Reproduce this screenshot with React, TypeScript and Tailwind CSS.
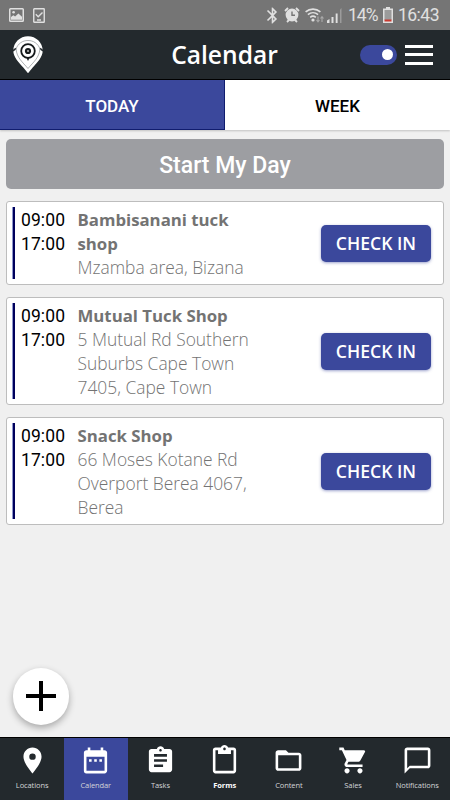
import { useState } from "react";
import clsx from "clsx";
import type { IconType } from "react-icons";
import {
  MdAssignment,
  MdBluetooth,
  MdChatBubbleOutline,
  MdContentPaste,
  MdDateRange,
  MdFolderOpen,
  MdLocationOn,
  MdShoppingCart,
} from "react-icons/md";

type Visit = {
  start: string;
  end: string;
  name: string;
  address: string;
};

const VISITS: Visit[] = [
  { start: "09:00", end: "17:00", name: "Bambisanani tuck shop", address: "Mzamba area, Bizana" },
  {
    start: "09:00",
    end: "17:00",
    name: "Mutual Tuck Shop",
    address: "5 Mutual Rd Southern Suburbs Cape Town 7405, Cape Town",
  },
  {
    start: "09:00",
    end: "17:00",
    name: "Snack Shop",
    address: "66 Moses Kotane Rd Overport Berea 4067, Berea",
  },
];

const NAV: { label: string; icon: IconType; bold?: boolean }[] = [
  { label: "Locations", icon: MdLocationOn },
  { label: "Calendar", icon: MdDateRange },
  { label: "Tasks", icon: MdAssignment },
  { label: "Forms", icon: MdContentPaste, bold: true },
  { label: "Content", icon: MdFolderOpen },
  { label: "Sales", icon: MdShoppingCart },
  { label: "Notifications", icon: MdChatBubbleOutline },
];

function StatusBar() {
  return (
    <div className="flex h-[30px] shrink-0 items-center bg-[#757575] pl-[9px] pr-[11px] text-[#e0e0e0]">
      <svg width="15" height="14" viewBox="0 0 15 14">
        <rect x="0.75" y="0.75" width="13.5" height="12.5" rx="0.8" fill="none" stroke="currentColor" strokeWidth="1.5" />
        <circle cx="4.6" cy="4.3" r="1.3" fill="currentColor" />
        <path d="M2 11.8V9l2.3-1.8 1.8 1.4L9.4 5.5 13 8.8v3z" fill="currentColor" />
      </svg>
      <svg className="ml-[9px]" width="12" height="15" viewBox="0 0 12 15">
        <rect x="0.75" y="0.75" width="10.5" height="13.5" rx="0.5" fill="none" stroke="currentColor" strokeWidth="1.4" />
        <path d="M2.8 6.3 5.2 8.7 9.5 4.4M4 12h4" fill="none" stroke="currentColor" strokeWidth="1.4" />
      </svg>

      <div className="ml-auto flex items-center">
        <MdBluetooth size={19} />
        <svg className="ml-[2px]" width="16" height="16" viewBox="0 0 16 16">
          <path d="M1 4 4 1M15 4 12 1M3 15l2-2M13 15l-2-2" stroke="currentColor" strokeWidth="1.8" />
          <circle cx="8" cy="8" r="6.4" fill="currentColor" />
          <path d="M8 4.5V8.3h3" fill="none" stroke="#757575" strokeWidth="1.4" />
        </svg>
        <svg className="ml-[5px]" width="20" height="16" viewBox="0 0 20 16">
          <g fill="none" stroke="currentColor" strokeWidth="1.6">
            <path d="M0.6 4.8a11.5 11.5 0 0 1 14.8 0" />
            <path d="M2.9 7.6a8 8 0 0 1 10.2 0" />
            <path d="M5.2 10.3a4.4 4.4 0 0 1 5.6 0" />
          </g>
          <circle cx="8" cy="13" r="1.6" fill="currentColor" />
          <path d="M13 9.5v5M11.5 13l1.5 1.8 1.5-1.8M17 15V10M15.5 11.5 17 9.7l1.5 1.8" fill="none" stroke="#a9a9a9" strokeWidth="1.1" />
        </svg>
        <svg className="ml-[2px]" width="15" height="15" viewBox="0 0 15 15">
          <path d="M0 15v-2.5L2.5 11v4zM4.5 9H6.5v6h-2zM8.7 5.5h1.9V15H8.700z" fill="currentColor" />
          <path d="M13 1.5 14.5 0v15H13z" fill="#9c9c9c" />
        </svg>
        <span className="ml-[6px] mt-[2px] w-[30px] whitespace-nowrap font-[Roboto,sans-serif] text-[17.5px] leading-none tracking-[-0.9px]">14%</span>
        <svg className="ml-[5px]" width="10" height="16" viewBox="0 0 10 16">
          <path d="M3 0h4v1.5h3V16H0V1.5h3z" fill="currentColor" />
          <path d="M1.5 3h7v10h-7z" fill="#9b9b9b" />
          <path d="M1.5 12.5h7v2h-7z" fill="#c9392f" />
        </svg>
        <span className="ml-[5px] mt-[2px] whitespace-nowrap font-[Roboto,sans-serif] text-[17.5px] leading-none tracking-[-0.5px]">16:43</span>
      </div>
    </div>
  );
}

function Logo() {
  return (
    <svg width="30" height="38" viewBox="0 0 30 38">
      <path d="M15 0.3C7 0.3 0.5 6.5 0.3 14.5 0.2 21 6 27 10.3 31.5L15 37.3l4.7-5.8C24 27 29.8 21 29.7 14.5 29.5 6.5 23 0.3 15 0.3z" fill="#fff" />
      <path d="M0 14.8 3 12.3M30 14.8 27 12.3" stroke="#23292d" strokeWidth="1.5" />
      <path d="M3 13C5 7.5 9.5 4.5 15 4.5S25 7.5 27 13C26 22 20.5 26 15 32.5 9.5 26 4 22 3 13z" fill="none" stroke="#8a8e91" strokeWidth="0.7" />
      <circle cx="15" cy="15" r="6.8" fill="#fff" stroke="#15191b" strokeWidth="1.8" />
      <circle cx="15" cy="15" r="3.1" fill="#15191b" />
      <circle cx="15" cy="15" r="1" fill="#bbb" />
      <path d="M13.3 21.5h3.4L15 25z" fill="#15191b" />
    </svg>
  );
}

function VisitCard({ visit }: { visit: Visit }) {
  return (
    <div className="flex rounded-[3px] border border-[#bdbdbd] bg-white py-[5px] pl-[5px] pr-[12px]">
      <div className="w-[3px] shrink-0 border-l border-[#8d96cc] bg-[#00005c]" />
      <div className="ml-[6px] mt-px w-[56.5px] shrink-0 font-[Roboto,sans-serif] text-[17.5px] leading-6 tracking-[0.1px] text-black">
        <p>{visit.start}</p>
        <p>{visit.end}</p>
      </div>
      <div className="-mb-px mt-px w-[190px] shrink-0 font-['Open_Sans',sans-serif] text-[#737373]">
        <p className="text-[16.8px] font-bold leading-6">{visit.name}</p>
        <p className="-mt-px mb-px text-[17.4px] font-light leading-6">{visit.address}</p>
      </div>
      <button className="ml-auto h-[37px] w-[110px] shrink-0 self-center rounded-[5px] bg-[#3b489c] font-['Open_Sans',sans-serif] text-[17.6px] font-semibold text-white shadow-[0_1px_3px_rgba(59,72,156,0.5)]">
        CHECK IN
      </button>
    </div>
  );
}

export default function App() {
  const [tab, setTab] = useState("TODAY");
  const [active, setActive] = useState("Calendar");
  const [online, setOnline] = useState(true);

  return (
    <div className="flex h-[800px] w-[450px] flex-col overflow-hidden bg-[#f0f0f0]">
      <StatusBar />

      {/* Header */}
      <header className="grid h-[50px] shrink-0 grid-cols-3 items-center border-b border-black bg-[#23292d] pl-[13px] pr-[17px]">
        <Logo />
        <h1 className="justify-self-center pl-[3px] pt-px font-['Open_Sans',sans-serif] text-[24.6px] font-semibold text-white">Calendar</h1>
        <div className="flex items-center justify-end gap-2">
          <button
            onClick={() => setOnline(!online)}
            className={clsx("flex h-5 w-[37px] items-center rounded-full bg-[#3b489c] px-1", online && "justify-end")}
          >
            <span className="size-[11px] rounded-full bg-white" />
          </button>
          <div className="flex w-7 flex-col gap-[5.5px]">
            <span className="h-[3px] bg-white" />
            <span className="h-[3px] bg-white" />
            <span className="h-[3px] bg-white" />
          </div>
        </div>
      </header>

      {/* Tabs */}
      <div className="grid h-[50px] shrink-0 grid-cols-2 font-[Roboto,sans-serif] text-[17px] font-medium shadow-[0_1px_2px_rgba(0,0,0,0.2)]">
        {["TODAY", "WEEK"].map((t) => (
          <button
            key={t}
            onClick={() => setTab(t)}
            className={clsx(
              tab === t ? "border-b border-r border-[#101c6e] bg-[#3b489c] pt-[4px] text-white" : "bg-white pt-[3px] text-black"
            )}
          >
            {t}
          </button>
        ))}
      </div>

      {/* Visits */}
      <main className="flex min-h-0 grow flex-col gap-3 px-[6px] pt-[9px]">
        <button className="h-[50px] shrink-0 rounded-[5px] bg-[#9d9ea2] pt-[4px] font-[Roboto,sans-serif] text-[23px] font-medium text-white">
          Start My Day
        </button>
        {VISITS.map((v) => (
          <VisitCard key={v.name} visit={v} />
        ))}
        <button className="mb-[12.5px] ml-[6.5px] mt-auto flex size-[56.5px] shrink-0 items-center justify-center rounded-full bg-white shadow-[0_3px_7px_rgba(0,0,0,0.3)]">
          <svg width="30" height="30" viewBox="0 0 30 30">
            <path d="M15 0v30M0 15h30" stroke="#000" strokeWidth="4" />
          </svg>
        </button>
      </main>

      {/* Bottom navigation */}
      <nav className="grid h-[63px] shrink-0 grid-cols-[repeat(7,64.2px)] border-t border-black bg-[#23292d] font-['Open_Sans',sans-serif] text-white">
        {NAV.map(({ label, icon: Icon, bold }) => (
          <button
            key={label}
            onClick={() => setActive(label)}
            className={clsx("flex flex-col items-center pt-[7px]", active === label && "bg-[#3b489c] pr-px")}
          >
            <Icon size={31} />
            <span
              className={clsx(
                "mt-[3px] text-[7.5px] leading-3 tracking-[-0.1px]",
                bold ? "font-bold" : "text-[#d3d5d8]"
              )}
            >
              {label}
            </span>
          </button>
        ))}
      </nav>
    </div>
  );
}
